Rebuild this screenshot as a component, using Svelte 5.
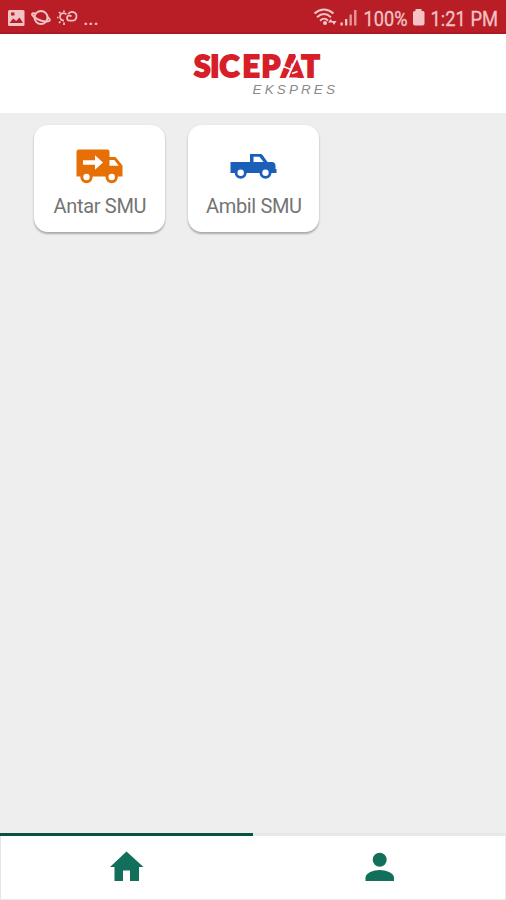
<script>
  const menu = [
    { id: 'antar', label: 'Antar SMU', width: 93 },
    { id: 'ambil', label: 'Ambil SMU', width: 96 }
  ];
</script>

<div class="screen">
  <header class="status">
    <svg class="notifs" width="104" height="34" viewBox="0 0 104 34">
      <rect x="8" y="10" width="16.5" height="16" rx="1.5" fill="#f3c3c5" />
      <path d="M9.500 23l3.700-4.500 3 2.500 3.300-3.500 3.500 5.500z" fill="#b91e26" />
      <path d="M11 12.500h3.500v3H11z" fill="#b91e26" />
      <g fill="none" stroke="#f3c3c5" stroke-width="2">
        <circle cx="41" cy="17.500" r="6.500" />
        <path d="M35.500 13.500c-4-1-4.500 1-2 3 4.500 3.500 9 5 13 5 4.500 0 4-2.500 1-4.500" />
      </g>
      <g fill="none" stroke="#f3c3c5" stroke-width="1.700">
        <path d="M66.500 14.500a3.700 3.700 0 1 0-2.500 6" />
        <path d="M71.500 16.500c-1.500-1.700-4.500-1-4.500 1.500 0 2 1.500 2.700 3 2.700h2a4.400 4.400 0 1 0-3.800-6.500" />
        <path d="M57 17.500h1.500M59 12l1.500 1.500M64 10.500v1.500M59 23l1.500-1.500M64 22.500V25" />
      </g>
      <text x="83" y="25" class="dots" textLength="16">...</text>
    </svg>
    <svg width="193" height="34" viewBox="313 0 193 34">
      <g fill="none" stroke="#f3c3c5" stroke-width="1.900">
        <path d="M314.500 13.500c6-5 13-5 19 0M317 17.200c4.500-4 9.500-4 14 0M320 20.700c3-2.800 5.500-2.800 8 0" />
      </g>
      <circle cx="325" cy="23" r="2" fill="#f3c3c5" />
      <path d="M328 22.500l2.700-3.500 2.500 3.500zM331.500 21h5l-2.500 4z" fill="#f3c3c5" />
      <g fill="#f3c3c5">
        <rect x="340.500" y="22.500" width="2.300" height="3" />
        <rect x="345" y="19" width="2.300" height="6.500" />
        <rect x="349.500" y="14.500" width="2.300" height="11" opacity=".75" />
        <rect x="354" y="10" width="2.500" height="15.500" opacity=".7" />
        <path d="M415.500 9h6v2h1.500q1.500 0 1.500 1.500v11q0 2-2 2H415q-2 0-2-2v-11q0-1.500 1.500-1.500h1z" />
      </g>
      <text x="363.500" y="25.800" class="clock" textLength="44" lengthAdjust="spacingAndGlyphs">100%</text>
      <text x="430.500" y="25.800" class="clock" textLength="67.500" lengthAdjust="spacingAndGlyphs">1:21 PM</text>
    </svg>
  </header>

  <div class="brand">
    <svg width="150" height="50" viewBox="190 50 150 50">
      <text class="name" y="77.300" x="194 210.300 219.500 242.600 261.500 281.500 301.500">SICEPAT</text>
      <path d="M294 61l9 16.500h-14z" fill="#d71f2a" />
      <path d="M297.500 56l-11.500 24" fill="none" stroke="#fff" stroke-width="2" />
      <path d="M282 66l9 3.500M292 73.500l5.500-2" fill="none" stroke="#fff" stroke-width="1.500" />
      <text x="252.500" y="93.500" class="sub" textLength="82.500">EKSPRES</text>
    </svg>
  </div>

  <main>
    {#each menu as item (item.id)}
      <button class="card">
        {#if item.id === 'antar'}
          <svg width="48" height="40" viewBox="76 145 48 40">
            <g fill="#e66f06">
              <path d="M79 149.500h28.500q2 0 2 2v5.500h6l7 8.500v11H76.500v-24.500q0-2.500 2.500-2.500z" />
              <circle cx="86.500" cy="177" r="6.200" /><circle cx="111.700" cy="177" r="6.200" />
            </g>
            <path fill="#fff" d="M83 160.200h12v-5l8 7.200-8 7.300v-5H83zM109.500 160h4.800l4.500 5.700h-9.300z" />
            <g fill="#fff"><circle cx="86.500" cy="177" r="3.200" /><circle cx="111.700" cy="177" r="3.200" /></g>
          </svg>
        {:else}
          <svg width="48" height="40" viewBox="230 145 48 40">
            <g fill="#1c5fb8">
              <path d="M250 154h10.500q1.300 0 2 1l5 7h5q3 .5 3 3.500v3.500h1v4h-46v-11H250z" />
              <circle cx="240.700" cy="172.700" r="6" /><circle cx="265.500" cy="172.700" r="6" />
            </g>
            <path fill="#fff" d="M253.500 156.700h6l4 5.300h-10z" />
            <g fill="#fff"><circle cx="240.700" cy="172.700" r="3.200" /><circle cx="265.500" cy="172.700" r="3.200" /></g>
          </svg>
        {/if}
        <svg class="label" width="110" height="26" viewBox="0 0 110 26">
          <text x={55 - item.width / 2} y="18.500" textLength={item.width}>{item.label}</text>
        </svg>
      </button>
    {/each}
  </main>

  <nav>
    <button class="tab active" aria-label="Home">
      <svg width="40" height="40" viewBox="107 847 40 40">
        <path fill="#116f5c" d="M126.500 851.500l17 15.500h-4.500v14h-9v-10.500h-7V881h-8.500v-14h-4.500z" />
      </svg>
    </button>
    <button class="tab" aria-label="Profile">
      <svg width="40" height="40" viewBox="360 847 40 40">
        <g fill="#116f5c">
          <circle cx="379.700" cy="859.700" r="7" />
          <path d="M365.500 881v-3.500c0-4.500 8-7.500 14.200-7.500s14.300 3 14.300 7.500v3.500z" />
        </g>
      </svg>
    </button>
  </nav>
</div>

<style>
  .screen {
    width: 506px;
    height: 900px;
    display: flex;
    flex-direction: column;
    background: #eee;
    font-family: Roboto, sans-serif;
  }
  svg { display: block; flex: none; overflow: visible; }
  button { border: 0; padding: 0; margin: 0; background: #fff; font: inherit; }
  .status {
    height: 34px;
    box-sizing: border-box;
    display: flex;
    justify-content: space-between;
    background: #b91e26;
    box-shadow: inset 0 -2px #ad1720;
  }
  .dots { font-size: 22px; fill: #f3c3c5; }
  .clock { font-size: 21px; fill: #f3c3c5; stroke: #f3c3c5; stroke-width: .3px; }
  .brand {
    height: 79px;
    display: flex;
    justify-content: center;
    box-sizing: border-box;
    padding: 16px 0 0 24px;
    background: #fff;
  }
  .name { font: 900 30px Lato, sans-serif; fill: #d71f2a; stroke: #d71f2a; stroke-width: 2px; }
  .sub { font: italic 13.5px "Liberation Sans", sans-serif; fill: #8a8a8a; }
  main {
    flex: 1;
    display: flex;
    align-items: flex-start;
    gap: 23px;
    padding: 12px 34px;
  }
  .card {
    width: 131px;
    height: 107px;
    box-sizing: border-box;
    display: flex;
    flex-direction: column;
    align-items: center;
    padding-top: 20px;
    border-radius: 14px;
    box-shadow: 0 2px 2px #aaa, 0 0 2px #ddd;
  }
  .label { margin-top: 9px; font-size: 20px; fill: #747474; }
  nav {
    height: 67px;
    display: flex;
    background: #fff;
    box-shadow: inset -1px -1px #e9e9e9, inset 1px 0 #e5e5e5;
  }
  .tab {
    flex: 1;
    display: flex;
    justify-content: center;
    box-sizing: border-box;
    padding-top: 11px;
    border-top: 3px solid #e8e8e8;
    background: transparent;
  }
  .tab.active { border-top-color: #0b5140; }
</style>
